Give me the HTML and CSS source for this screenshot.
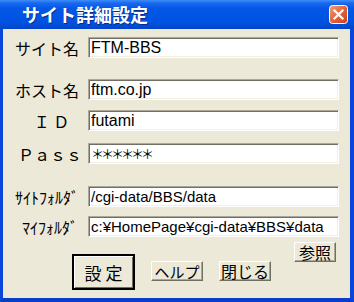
FILE: index.html
```html
<!DOCTYPE html>
<html lang="ja">
<head>
    <meta charset="UTF-8">
    <meta name="viewport" content="width=device-width, initial-scale=1.0">
    <title>サイト詳細設定</title>
    <link rel="stylesheet" href="styles.css">
</head>
<body>
    <div class="window">
        <!-- Title bar -->
        <div class="titlebar">
            <span class="title">サイト詳細設定</span>
            <span class="close-btn">
                <svg width="19" height="19" viewBox="0 0 19 19">
                    <defs>
                        <linearGradient id="cg" x1="0" y1="0" x2="1" y2="1">
                            <stop offset="0" stop-color="#f0a184"/>
                            <stop offset="0.5" stop-color="#e0643c"/>
                            <stop offset="1" stop-color="#c8411c"/>
                        </linearGradient>
                    </defs>
                    <rect x="0.5" y="0.5" width="18" height="18" rx="3" fill="url(#cg)" stroke="#fff"/>
                    <path d="M5.5 5.5 L13.5 13.5 M13.5 5.5 L5.5 13.5" stroke="#fff" stroke-width="2.2" stroke-linecap="square"/>
                </svg>
            </span>
        </div>

        <div class="frame">
            <div class="client">
                <div class="row row-site">
                    <span class="label">サイト名</span>
                    <input class="field" type="text" value="FTM-BBS">
                </div>
                <div class="row row-host">
                    <span class="label">ホスト名</span>
                    <input class="field" type="text" value="ftm.co.jp">
                </div>
                <div class="row row-id">
                    <span class="label label-center">Ｉ Ｄ</span>
                    <input class="field" type="text" value="futami">
                </div>
                <div class="row row-pass">
                    <span class="label label-pass">Ｐａｓｓ</span>
                    <input class="field field-pass" type="text" value="＊＊＊＊＊＊">
                </div>
                <div class="row row-folder">
                    <span class="label label-narrow">ｻｲﾄﾌｫﾙﾀﾞ</span>
                    <input class="field field-small" type="text" value="/cgi-data/BBS/data">
                </div>
                <div class="row row-myfolder">
                    <span class="label label-narrow">ﾏｲﾌｫﾙﾀﾞ</span>
                    <input class="field field-small" type="text" value="c:¥HomePage¥cgi-data¥BBS¥data">
                </div>

                <!-- Buttons -->
                <div class="buttons">
                    <button class="btn btn-default">設 定</button>
                    <button class="btn btn-small btn-help">ヘルプ</button>
                    <button class="btn btn-small btn-close">閉じる</button>
                    <button class="btn btn-small btn-browse">参照</button>
                </div>
            </div>
        </div>
    </div>
</body>
</html>
```

FILE: styles.css
```css
body {
    margin: 0;
    padding: 0;
    background-color: #0a46dc;
    font-family: "Noto Sans CJK JP", sans-serif;
}
.window {
    width: 354px;
    height: 302px;
    display: flex;
    flex-direction: column;
    overflow: hidden;
}
/* Title bar */
.titlebar {
    height: 29px;
    flex-shrink: 0;
    display: flex;
    align-items: center;
    justify-content: space-between;
    padding: 0 6px 0 22px;
    background: linear-gradient(#3d8ef8 0, #1a6af0 3px, #0558e6 8px, #0054e3 18px, #0050dc 24px, #0444c8 29px);
}
.title {
    color: #fff;
    font-size: 18px;
    font-weight: bold;
    text-shadow: 1px 1px 0 #0a2a8c;
    line-height: 29px;
}
.close-btn {
    display: flex;
    margin-top: -1px;
}
/* Window border */
.frame {
    flex: 1;
    display: flex;
    border-left: 3px solid #0a46dc;
    border-right: 4px solid #0a46dc;
    border-bottom: 4px solid #0a3cc8;
}
.client {
    flex: 1;
    background-color: #ece9d8;
    padding: 8px 0 0 12px;
    display: flex;
    flex-direction: column;
}
.row {
    display: flex;
    align-items: center;
    height: 21px;
}
.row-host {
    margin-top: 21px;
}
.row-id {
    margin-top: 10px;
}
.row-pass {
    margin-top: 12px;
}
.row-folder {
    margin-top: 22px;
}
.row-myfolder {
    margin-top: 9px;
}
.label {
    width: 73px;
    box-sizing: border-box;
    padding-right: 10px;
    text-align: right;
    font-size: 16px;
    color: #000;
    white-space: nowrap;
}
.label-center {
    text-align: center;
    padding-right: 0;
}
.label-pass {
    padding-right: 6px;
}
.label-narrow {
    font-size: 16px;
}
/* Text fields */
.field {
    width: 251px;
    height: 21px;
    box-sizing: border-box;
    margin: 0;
    padding: 0 0 0 2px;
    border: 1px solid;
    border-color: #aca899 #fff #fff #aca899;
    box-shadow: inset 1px 1px 0 #716f64, inset -1px -1px 0 #f1efe2;
    background-color: #fff;
    font-family: "Liberation Sans", "Noto Sans CJK JP", sans-serif;
    font-size: 16px;
    color: #000;
    outline: none;
}
.field-pass {
    font-family: "Noto Sans CJK JP", sans-serif;
    font-size: 13px;
    letter-spacing: -3px;
}
.field-small {
    font-size: 15px;
}
/* Buttons */
.buttons {
    display: flex;
    align-items: flex-start;
    margin-top: 5px;
    padding-left: 57px;
}
.btn {
    margin: 0;
    padding: 0;
    background-color: #ece9d8;
    font-family: "Noto Sans CJK JP", sans-serif;
    font-size: 16px;
    color: #000;
    border: 1px solid;
    border-color: #fff #716f64 #716f64 #fff;
    box-shadow: inset -1px -1px 0 #aca899;
    white-space: nowrap;
    line-height: 1;
}
.btn-default {
    width: 63px;
    height: 36px;
    margin-top: 12px;
    border: 2px solid;
    border-color: #000;
    box-shadow: inset 1px 1px 0 #fff, inset -1px -1px 0 #716f64;
    font-size: 17px;
}
.btn-small {
    height: 20px;
}
.btn-help {
    width: 52px;
    margin-top: 19px;
    margin-left: 16px;
    font-size: 15px;
}
.btn-close {
    width: 52px;
    margin-top: 19px;
    margin-left: 16px;
}
.btn-browse {
    width: 42px;
    margin-left: 23px;
}
```
